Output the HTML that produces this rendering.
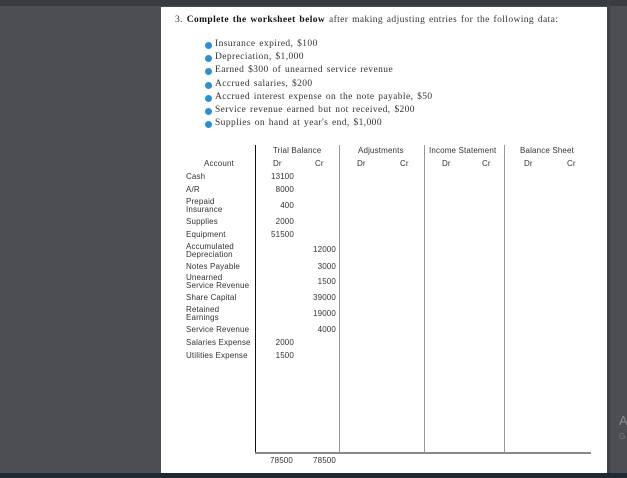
<!DOCTYPE html>
<html><head><style>
body{margin:0;width:627px;height:478px;background:#4b4f53;position:relative;overflow:hidden;font-family:"Liberation Sans",sans-serif}
.a{position:absolute;white-space:nowrap}
#top{position:absolute;left:0;top:0;width:627px;height:6px;background:#393c3f}
#page{position:absolute;left:161px;top:7px;width:446px;height:466px;background:#fff}
#rl{position:absolute;left:607px;top:0;width:3px;height:478px;background:#3e4144}
#bot{position:absolute;left:0;top:473px;width:627px;height:5px;background:#1e2a33}
.s{font-family:"Liberation Serif",serif;font-size:9.5px;color:#333;letter-spacing:0.4px;word-spacing:1px}
.b{position:absolute;left:205px;width:7px;height:7px;border-radius:50%;background:#2a8fd6}
.t{font-size:8px;color:#333;line-height:8px;letter-spacing:0.15px}
.v{position:absolute;top:145px;height:308px;width:1px;background:#999}
.r{text-align:right}
</style></head><body>
<div id="top"></div><div id="page"></div><div id="rl"></div><div id="bot"></div>
<div class="a s" style="left:175px;top:15px">3. <b style="color:#111">Complete the worksheet below</b> after making adjusting entries for the following data:</div>
<div class="b" style="top:42px"></div><div class="a s" style="left:215px;top:39px">Insurance expired, $100</div>
<div class="b" style="top:55px"></div><div class="a s" style="left:215px;top:52px">Depreciation, $1,000</div>
<div class="b" style="top:68px"></div><div class="a s" style="left:215px;top:65px">Earned $300 of unearned service revenue</div>
<div class="b" style="top:82px"></div><div class="a s" style="left:215px;top:79px">Accrued salaries, $200</div>
<div class="b" style="top:95px"></div><div class="a s" style="left:215px;top:92px">Accrued interest expense on the note payable, $50</div>
<div class="b" style="top:108px"></div><div class="a s" style="left:215px;top:105px">Service revenue earned but not received, $200</div>
<div class="b" style="top:121px"></div><div class="a s" style="left:215px;top:118px">Supplies on hand at year's end, $1,000</div>

<div class="v" style="left:255px;background:#111"></div>
<div class="v" style="left:339px"></div>
<div class="v" style="left:424px"></div>
<div class="v" style="left:504px"></div>
<div style="position:absolute;left:255px;top:452px;width:336px;height:2px;background:#888"></div>

<div class="a t" style="left:273px;top:147px">Trial Balance</div>
<div class="a t" style="left:358px;top:147px">Adjustments</div>
<div class="a t" style="left:429px;top:147px">Income Statement</div>
<div class="a t" style="left:520px;top:147px">Balance Sheet</div>
<div class="a t" style="left:204px;top:160px">Account</div>
<div class="a t" style="left:273px;top:160px">Dr</div><div class="a t" style="left:315px;top:160px">Cr</div>
<div class="a t" style="left:357px;top:160px">Dr</div><div class="a t" style="left:400px;top:160px">Cr</div>
<div class="a t" style="left:442px;top:160px">Dr</div><div class="a t" style="left:482px;top:160px">Cr</div>
<div class="a t" style="left:524px;top:160px">Dr</div><div class="a t" style="left:567px;top:160px">Cr</div>

<div class="a t" style="left:186px;top:173px">Cash</div>
<div class="a t" style="left:186px;top:186px">A/R</div>
<div class="a t" style="left:186px;top:198px">Prepaid<br>Insurance</div>
<div class="a t" style="left:186px;top:218px">Supplies</div>
<div class="a t" style="left:186px;top:231px">Equipment</div>
<div class="a t" style="left:186px;top:243px">Accumulated<br>Depreciation</div>
<div class="a t" style="left:186px;top:263px">Notes Payable</div>
<div class="a t" style="left:186px;top:274px">Unearned<br>Service Revenue</div>
<div class="a t" style="left:186px;top:294px">Share Capital</div>
<div class="a t" style="left:186px;top:306px">Retained<br>Earnings</div>
<div class="a t" style="left:186px;top:326px">Service Revenue</div>
<div class="a t" style="left:186px;top:339px">Salaries Expense</div>
<div class="a t" style="left:186px;top:352px">Utilities Expense</div>

<div class="a t r" style="right:333px;top:173px">13100</div>
<div class="a t r" style="right:333px;top:186px">8000</div>
<div class="a t r" style="right:333px;top:202px">400</div>
<div class="a t r" style="right:333px;top:218px">2000</div>
<div class="a t r" style="right:333px;top:231px">51500</div>
<div class="a t r" style="right:291px;top:246px">12000</div>
<div class="a t r" style="right:291px;top:263px">3000</div>
<div class="a t r" style="right:291px;top:278px">1500</div>
<div class="a t r" style="right:291px;top:294px">39000</div>
<div class="a t r" style="right:291px;top:310px">19000</div>
<div class="a t r" style="right:291px;top:326px">4000</div>
<div class="a t r" style="right:333px;top:339px">2000</div>
<div class="a t r" style="right:333px;top:352px">1500</div>
<div class="a t" style="left:270px;top:457px">78500</div>
<div class="a t" style="left:313px;top:457px">78500</div>
<div class="a" style="left:619px;top:413px;font-size:13px;color:#8a8d90">A</div>
<div class="a" style="left:619px;top:432px;font-size:8px;color:#7a7d80">G</div>
</body></html>
